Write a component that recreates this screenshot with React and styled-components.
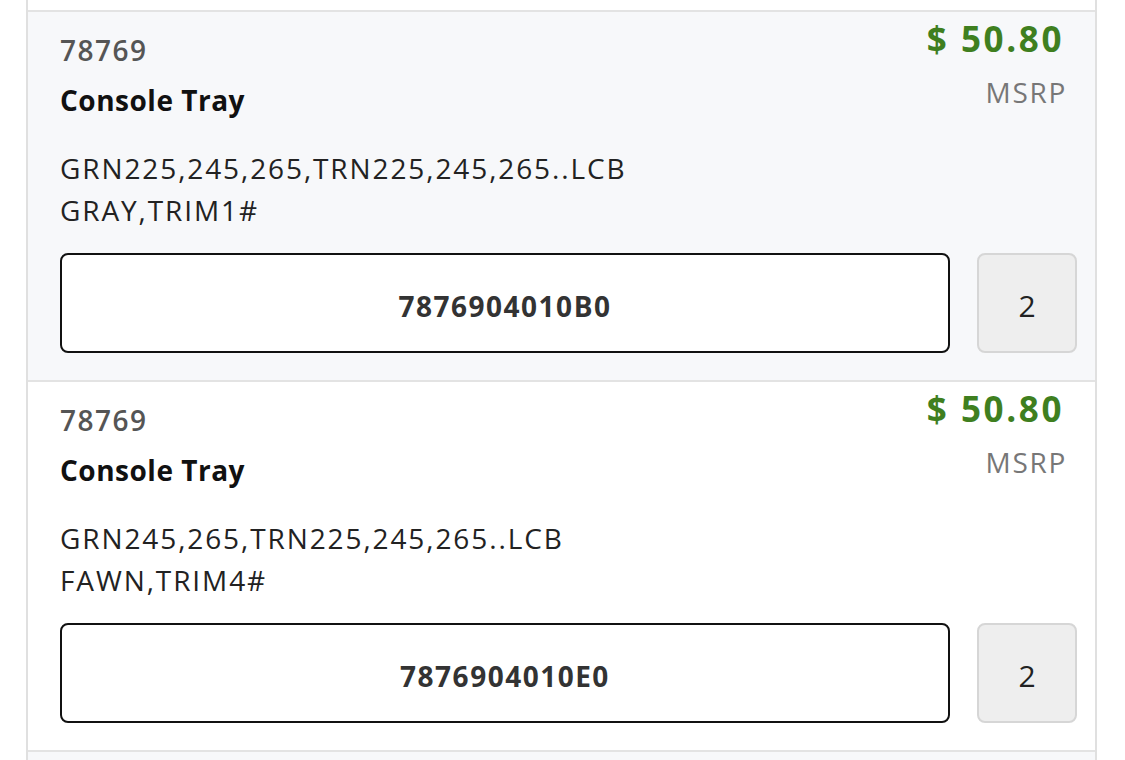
import React from "react";
import styled, { createGlobalStyle } from "styled-components";

const GlobalStyle = createGlobalStyle`
  html, body {
    margin: 0;
    padding: 0;
    background: #ffffff;
    overflow: hidden;
  }
  body {
    font-family: "Open Sans", Lato, "Liberation Sans", sans-serif;
  }
`;

const Panel = styled.div`
  margin-left: 26px;
  width: 1071px;
  box-sizing: border-box;
  border-left: 2px solid #e0e0e0;
  border-right: 2px solid #e0e0e0;
  padding-top: 10px;
  height: 760px;
`;

const Row = styled.div`
  background: ${(p) => (p.$shaded ? "#f7f8fa" : "#ffffff")};
  border-top: 2px solid #e3e3e3;
  padding: 7px 18px 27px 32px;
`;

const Top = styled.div`
  display: flex;
  justify-content: space-between;
  align-items: flex-start;
`;

const Left = styled.div`
  display: flex;
  flex-direction: column;
`;

const Right = styled.div`
  display: flex;
  flex-direction: column;
  align-items: flex-end;
  padding-right: 13px;
`;

const Number = styled.div`
  margin-top: 11px;
  font-size: 28px;
  font-weight: 600;
  line-height: 40px;
  letter-spacing: 1.5px;
  color: #555555;
`;

const Name = styled.div`
  margin-top: 10px;
  font-size: 28px;
  font-weight: 700;
  line-height: 40px;
  letter-spacing: 0.5px;
  color: #111111;
`;

const Price = styled.div`
  font-size: 35px;
  font-weight: 700;
  line-height: 40px;
  letter-spacing: 2.6px;
  color: #3f7f1f;
`;

const Msrp = styled.div`
  margin-top: 13px;
  margin-right: -3px;
  font-size: 28px;
  font-weight: 400;
  line-height: 40px;
  letter-spacing: 1.7px;
  color: #777777;
`;

const Description = styled.div`
  margin-top: 27px;
  font-size: 28px;
  line-height: 42px;
  letter-spacing: 1.9px;
  color: #222222;
`;

const Actions = styled.div`
  margin-top: 22px;
  display: flex;
  gap: 27px;
`;

const PartBox = styled.div`
  flex: 1;
  height: 100px;
  box-sizing: border-box;
  padding-top: 5px;
  border: 2px solid #111111;
  border-radius: 8px;
  background: #ffffff;
  display: flex;
  align-items: center;
  justify-content: center;
  font-size: 28px;
  font-weight: 700;
  letter-spacing: 1.5px;
  color: #333333;
`;

const QtyBox = styled.div`
  width: 100px;
  height: 100px;
  box-sizing: border-box;
  padding-top: 5px;
  border: 2px solid #d6d6d6;
  border-radius: 8px;
  background: #eeeeee;
  display: flex;
  align-items: center;
  justify-content: center;
  font-size: 30px;
  color: #222222;
`;

const items = [
  {
    number: "78769",
    name: "Console Tray",
    price: "$ 50.80",
    desc: ["GRN225,245,265,TRN225,245,265..LCB", "GRAY,TRIM1#"],
    part: "7876904010B0",
    qty: 2,
  },
  {
    number: "78769",
    name: "Console Tray",
    price: "$ 50.80",
    desc: ["GRN245,265,TRN225,245,265..LCB", "FAWN,TRIM4#"],
    part: "7876904010E0",
    qty: 2,
  },
];

export default function App() {
  return (
    <>
      <GlobalStyle />
      <Panel>
        {items.map((item, i) => (
          <Row key={i} $shaded={i % 2 === 0}>
            <Top>
              <Left>
                <Number>{item.number}</Number>
                <Name>{item.name}</Name>
              </Left>
              <Right>
                <Price>{item.price}</Price>
                <Msrp>MSRP</Msrp>
              </Right>
            </Top>
            <Description>
              {item.desc.map((line) => (
                <div key={line}>{line}</div>
              ))}
            </Description>
            <Actions>
              <PartBox>{item.part}</PartBox>
              <QtyBox>{item.qty}</QtyBox>
            </Actions>
          </Row>
        ))}
        <Row $shaded />
      </Panel>
    </>
  );
}
